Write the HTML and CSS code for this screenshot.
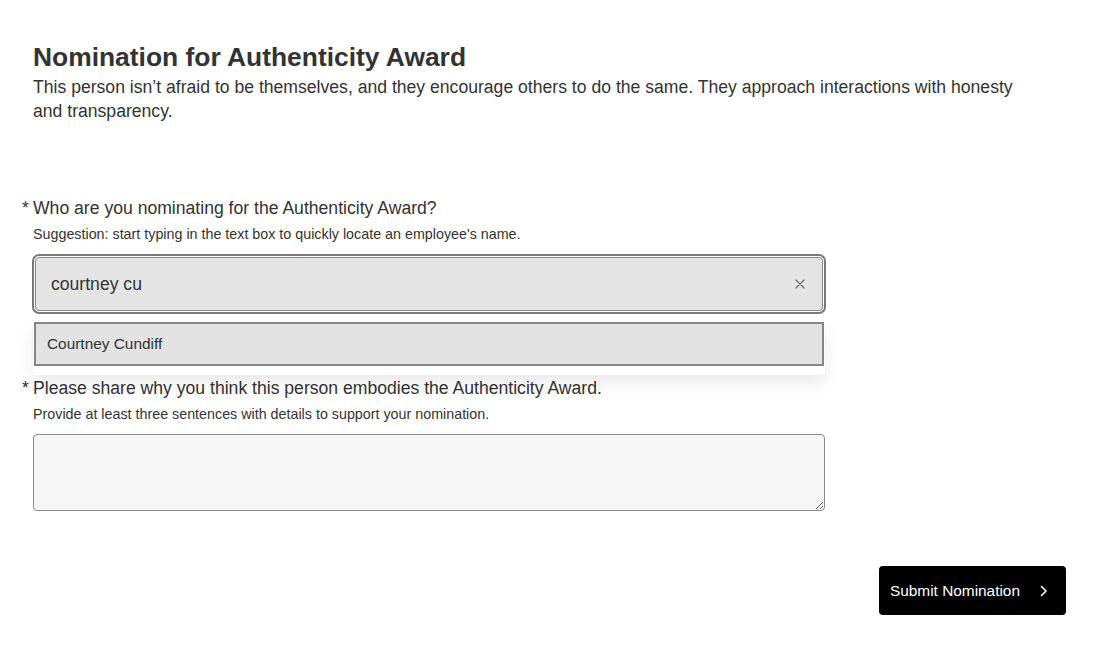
FILE: index.html
```html
<!DOCTYPE html>
<html lang="en">
<head>
<meta charset="utf-8">
<title>Nomination for Authenticity Award</title>
<link rel="stylesheet" href="styles.css">
</head>
<body>
<main class="page">
  <header class="intro">
    <h1 class="title">Nomination for Authenticity Award</h1>
    <p class="desc">This person isn’t afraid to be themselves, and they encourage others to do the same. They approach interactions with honesty and transparency.</p>
  </header>

  <form class="form">
    <div class="field field-name">
      <label class="label"><span class="req">*</span>Who are you nominating for the Authenticity Award?</label>
      <p class="help">Suggestion: start typing in the text box to quickly locate an employee's name.</p>
      <div class="combo">
        <div class="input focused">
          <span class="input-value">courtney cu</span>
          <svg class="clear" width="10" height="10" viewBox="0 0 10 10"><path d="M1 1 L9 9 M9 1 L1 9" stroke="#707070" stroke-width="1.4" stroke-linecap="round"/></svg>
        </div>
        <div class="menu">
          <div class="option">Courtney Cundiff</div>
        </div>
      </div>
    </div>

    <div class="field field-why">
      <label class="label"><span class="req">*</span>Please share why you think this person embodies the Authenticity Award.</label>
      <p class="help">Provide at least three sentences with details to support your nomination.</p>
      <textarea class="textarea"></textarea>
    </div>

    <div class="actions">
      <button type="button" class="submit">Submit Nomination
        <svg class="chev" width="8" height="12" viewBox="0 0 8 12"><path d="M1.5 1.5 L6 6 L1.5 10.5" fill="none" stroke="#fff" stroke-width="1.6" stroke-linecap="round" stroke-linejoin="round"/></svg>
      </button>
    </div>
  </form>
</main>
</body>
</html>
```

FILE: styles.css
```css
* { box-sizing: border-box; }
html, body { margin: 0; padding: 0; background: #fff; }
body {
  font-family: "Liberation Sans", Arial, Helvetica, sans-serif;
  color: #333;
}
.page {
  padding: 42px 33px 0 33px;
}
.title {
  margin: 0;
  font-size: 26.4px;
  line-height: 31px;
  font-weight: 700;
  color: #333;
}
.desc {
  margin: 2px 0 0 0;
  font-size: 17.6px;
  line-height: 24px;
  max-width: 1000px;
  color: #333;
}
.form {
  margin-top: 75px;
  width: 792px;
}
.field { display: flex; flex-direction: column; }
.label {
  position: relative;
  font-size: 17.6px;
  line-height: 20px;
  color: #333;
}
.req {
  position: absolute;
  left: -11px;
  top: 0;
}
.help {
  margin: 8px 0 0 0;
  font-size: 14.3px;
  line-height: 16px;
  color: #333;
}
.combo {
  position: relative;
  margin-top: 12px;
}
.input {
  display: flex;
  align-items: center;
  height: 54px;
  margin: 3px 2px 0 2px;
  padding: 0 17px 0 15px;
  background: #e4e4e4;
  border: 1px solid #8a8a8a;
  border-radius: 4px;
}
.input.focused {
  outline: 2px solid #7a7a7a;
  outline-offset: 1px;
}
.input-value {
  flex: 1;
  font-size: 17.6px;
  color: #333;
}
.clear {
  display: block;
}
.menu {
  position: absolute;
  left: 0;
  right: 0;
  top: 67px;
  background: #fff;
  padding: 1px 1px 9px 1px;
  box-shadow: 0 8px 16px rgba(0,0,0,0.09);
  z-index: 2;
}
.option {
  height: 44px;
  display: flex;
  align-items: center;
  padding-left: 11px;
  background: #e2e2e2;
  border: 2px solid #858585;
  font-size: 15.4px;
  color: #333;
}
.field-why {
  margin-top: 67px;
}
.textarea {
  margin-top: 12px;
  height: 77px;
  width: 792px;
  background: #f5f5f5;
  border: 1px solid #8a8a8a;
  border-radius: 4px;
  resize: vertical;
  font-family: inherit;
}
.actions {
  display: flex;
  justify-content: flex-end;
  width: 1033px;
  margin-top: 55px;
}
.submit {
  display: flex;
  align-items: center;
  gap: 20px;
  height: 49px;
  padding: 0 18px 0 11px;
  background: #000;
  color: #fff;
  border: 0;
  border-radius: 4px;
  font-family: inherit;
  font-size: 15.4px;
  cursor: pointer;
}
.chev { display: block; }
```
